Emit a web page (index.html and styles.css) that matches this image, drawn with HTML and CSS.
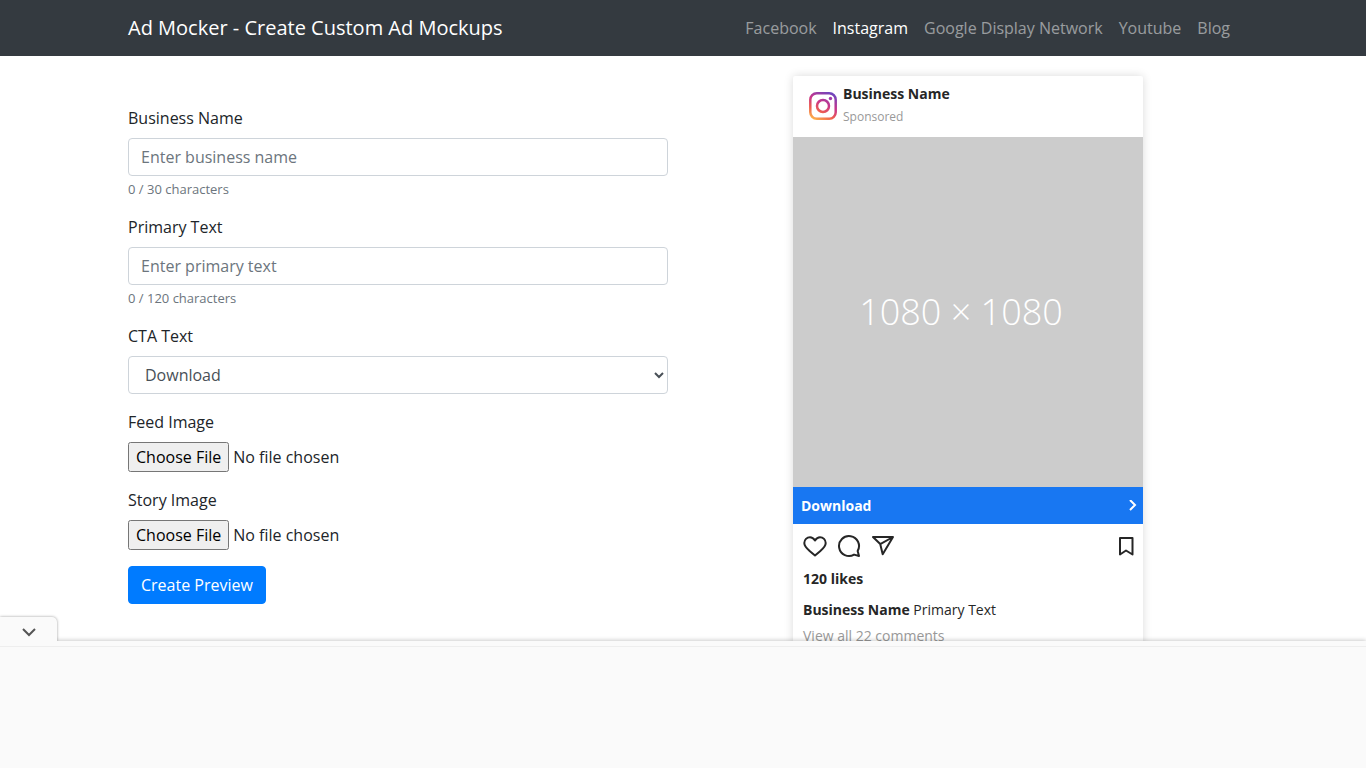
FILE: index.html
```html
<!DOCTYPE html>
<html lang="en">
<head>
    <meta charset="UTF-8">
    <meta name="viewport" content="width=device-width, initial-scale=1.0">
    <title>Ad Mocker - Create Custom Ad Mockups</title>
    <link rel="stylesheet" href="styles.css">
</head>
<body>
    <nav class="navbar">
        <div class="container navbar-inner">
            <a class="navbar-brand" href="#">Ad Mocker - Create Custom Ad Mockups</a>
            <div class="navbar-links">
                <a class="nav-link" href="#">Facebook</a>
                <a class="nav-link active" href="#">Instagram</a>
                <a class="nav-link" href="#">Google Display Network</a>
                <a class="nav-link" href="#">Youtube</a>
                <a class="nav-link" href="#">Blog</a>
            </div>
        </div>
    </nav>

    <main class="container row">
        <form class="col form">
            <div class="form-group">
                <label for="businessName">Business Name</label>
                <input type="text" class="form-control" id="businessName" placeholder="Enter business name" maxlength="30">
                <small class="form-text"><span id="businessCount">0</span> / 30 characters</small>
            </div>
            <div class="form-group">
                <label for="primaryText">Primary Text</label>
                <input type="text" class="form-control" id="primaryText" placeholder="Enter primary text" maxlength="120">
                <small class="form-text"><span id="primaryCount">0</span> / 120 characters</small>
            </div>
            <div class="form-group">
                <label for="ctaText">CTA Text</label>
                <select class="form-control" id="ctaText">
                    <option>Download</option>
                </select>
            </div>
            <div class="form-group">
                <label for="feedImage">Feed Image</label>
                <input type="file" class="form-file" id="feedImage">
            </div>
            <div class="form-group">
                <label for="storyImage">Story Image</label>
                <input type="file" class="form-file" id="storyImage">
            </div>
            <button type="button" class="btn">Create Preview</button>
        </form>

        <div class="col preview">
            <div class="card">
                <div class="card-header">
                    <svg class="logo" viewBox="0 0 28 28" fill="none">
                        <defs>
                            <linearGradient id="ig" x1="6" y1="28" x2="20" y2="0" gradientUnits="userSpaceOnUse">
                                <stop offset="0" stop-color="#fdb44b"/>
                                <stop offset="0.3" stop-color="#ee5f4f"/>
                                <stop offset="0.6" stop-color="#c8358b"/>
                                <stop offset="1" stop-color="#6f45bd"/>
                            </linearGradient>
                        </defs>
                        <rect x="1.3" y="1.3" width="25.4" height="25.4" rx="6.5" stroke="url(#ig)" stroke-width="2.5"/>
                        <circle cx="14" cy="14" r="6" stroke="url(#ig)" stroke-width="2.5"/>
                        <circle cx="21.5" cy="6.5" r="1.7" fill="#a13bab"/>
                    </svg>
                    <div>
                        <div class="card-name">Business Name</div>
                        <div class="card-sponsored">Sponsored</div>
                    </div>
                </div>
                <div class="card-image">1080 × 1080</div>
                <div class="card-cta">
                    <span>Download</span>
                    <svg width="8" height="12" viewBox="0 0 8 12" fill="none" stroke="#fff" stroke-width="2"><path d="M1 0l5 5-5 5"/></svg>
                </div>
                <div class="card-body">
                    <div class="card-actions">
                        <svg width="24" height="24" viewBox="0 0 24 24" fill="none" stroke="#262626" stroke-width="2" stroke-linejoin="round"><path d="M17 3.200C14.700 3.200 13.200 4.600 12 6.500 10.800 4.600 9.300 3.200 7 3.200 3.900 3.200 1.300 5.800 1.300 9.100c0 3.400 2.700 5.600 5.300 7.800L12 21.500l5.400-4.600c2.600-2.200 5.300-4.400 5.300-7.800 0-3.300-2.600-5.900-5.700-5.900Z"/></svg>
                        <svg width="24" height="24" viewBox="0 0 24 24" fill="none" stroke="#262626" stroke-width="2" stroke-linejoin="round"><path d="M20.656 17.008a9.993 9.993 0 1 0-3.590 3.615L22 22Z"/></svg>
                        <svg width="24" height="24" viewBox="0 0 24 24" fill="none" stroke="#262626" stroke-width="2" stroke-linejoin="round"><path d="M22 3 9.218 10.083M11.698 20.334 22 3.001H2l7.218 7.083 2.480 10.250Z"/></svg>
                        <svg class="card-save" width="24" height="24" viewBox="0 0 24 24" fill="none" stroke="#262626" stroke-width="2" stroke-linejoin="round"><path d="M18.500 20.500 12 16.500l-6 4V4h12.500Z"/></svg>
                    </div>
                    <div class="card-likes">120 likes</div>
                    <div class="card-text"><b>Business Name</b> Primary Text</div>
                    <div class="card-comments">View all 22 comments</div>
                </div>
            </div>
        </div>
    </main>

    <div class="ad-bar">
        <button type="button" class="ad-toggle" aria-label="Collapse">
            <svg width="14" height="9" viewBox="0 0 14 9" fill="none" stroke="#555" stroke-width="2"><path d="M1 1l6 6 6-6"/></svg>
        </button>
        <div class="ad-slot"></div>
    </div>

    <script>
        function countChars(inputId, countId) {
            const input = document.getElementById(inputId);
            input.addEventListener('input', () => {
                document.getElementById(countId).innerText = input.value.length;
            });
        }
        countChars('businessName', 'businessCount');
        countChars('primaryText', 'primaryCount');
    </script>
</body>
</html>
```
FILE: styles.css
```css
* {
    box-sizing: border-box;
}
body {
    margin: 0;
    font-family: "Open Sans", "Liberation Sans", sans-serif;
    font-size: 16px;
    line-height: 24px;
    color: #212529;
    background: #fff;
}
.container {
    width: 100%;
    max-width: 1140px;
    margin: 0 auto;
    padding: 0 15px;
}
.navbar {
    background: #343a40;
    padding: 8px 0;
}
.navbar-inner {
    display: flex;
    align-items: center;
    justify-content: space-between;
}
.navbar-brand {
    color: #fff;
    font-size: 20px;
    line-height: 30px;
    text-decoration: none;
}
.navbar-links {
    display: flex;
}
.nav-link {
    padding: 8px;
    color: rgba(255, 255, 255, 0.5);
    text-decoration: none;
}
.nav-link.active {
    color: #fff;
}
.row {
    display: flex;
    gap: 30px;
}
.col {
    flex: 1;
    min-width: 0;
}
.form {
    padding-top: 50px;
}
.form-group {
    margin-bottom: 16px;
}
.form-group label {
    display: block;
    margin-bottom: 8px;
}
.form-control {
    display: block;
    width: 100%;
    height: 38px;
    padding: 6px 12px;
    font: inherit;
    color: #495057;
    background: #fff;
    border: 1px solid #ced4da;
    border-radius: 4px;
}
.form-control::placeholder {
    color: #6c757d;
}
.form-text {
    display: block;
    margin-top: 4px;
    font-size: 13px;
    line-height: 19px;
    color: #6c757d;
}
.form-file {
    display: block;
    width: 100%;
    height: 30px;
    font: inherit;
}
.form-file::file-selector-button {
    height: 30px;
    font: inherit;
}
.btn {
    height: 38px;
    padding: 6px 12px;
    font: inherit;
    color: #fff;
    background: #007bff;
    border: 1px solid #007bff;
    border-radius: 4px;
    cursor: pointer;
}
.preview {
    padding-top: 20px;
}
.card {
    width: 350px;
    max-width: 100%;
    margin: 0 auto;
    background: #fff;
    border-radius: 2px;
    box-shadow: 0 0 10px rgba(0, 0, 0, 0.15);
    font-size: 14px;
    line-height: 20px;
    color: #262626;
}
.card-header {
    display: flex;
    gap: 6px;
    padding: 8px 16px;
    height: 61px;
}
.logo {
    width: 28px;
    height: 28px;
    margin-top: 8px;
}
.card-name {
    font-weight: bold;
}
.card-sponsored {
    margin-top: 3px;
    font-size: 12px;
    color: #999;
}
.card-image {
    display: flex;
    align-items: center;
    justify-content: center;
    aspect-ratio: 1;
    padding-right: 14px;
    background: #ccc;
    color: #fff;
    font-size: 36px;
    font-weight: 300;
}
.card-cta {
    display: flex;
    align-items: center;
    justify-content: space-between;
    height: 37px;
    padding: 0 6px 0 8px;
    background: #1877f2;
    color: #fff;
    font-weight: bold;
}
.card-body {
    padding: 10px;
}
.card-actions {
    display: flex;
    gap: 10px;
    margin-bottom: 11px;
}
.card-save {
    margin-left: auto;
    margin-right: -5px;
}
.card-likes {
    margin-bottom: 11px;
    font-weight: bold;
}
.card-text {
    margin-bottom: 6px;
}
.card-comments {
    color: #999;
}
/* sticky ad at the bottom of the window */
.ad-bar {
    position: fixed;
    left: 0;
    right: 0;
    bottom: 0;
    padding-top: 5px;
    background: #fafafa;
    box-shadow: 0 -1px 4px rgba(0, 0, 0, 0.2);
}
.ad-slot {
    height: 122px;
    border-top: 1px solid #eee;
}
.ad-toggle {
    position: absolute;
    left: 0;
    bottom: 100%;
    display: flex;
    align-items: center;
    justify-content: center;
    width: 57px;
    height: 24px;
    padding: 6px 6px 0;
    background: #fafafa;
    border: 0;
    border-radius: 0 5px 0 0;
    box-shadow: 0 0 3px rgba(0, 0, 0, 0.4);
    cursor: pointer;
    clip-path: inset(-4px -4px 0 0);
}
```
